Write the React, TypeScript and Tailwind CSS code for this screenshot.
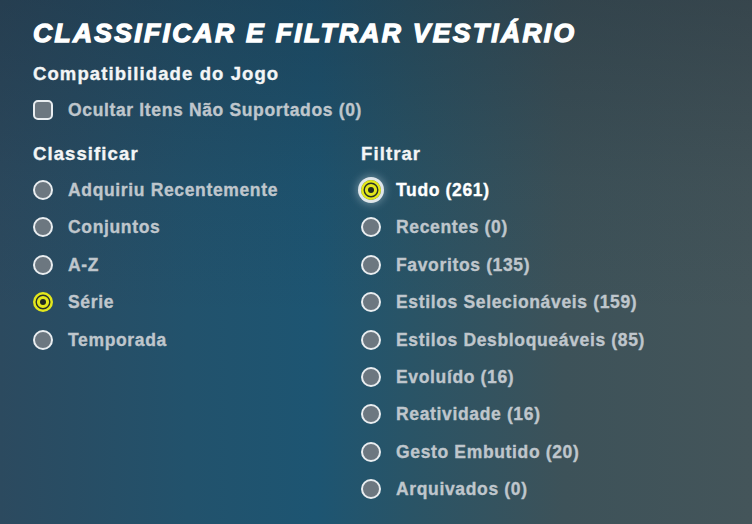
import React from "react";

type Opcao = { label: string; selected?: boolean; focused?: boolean };

const classificar: Opcao[] = [
  { label: "Adquiriu Recentemente" },
  { label: "Conjuntos" },
  { label: "A-Z" },
  { label: "Série", selected: true },
  { label: "Temporada" },
];

const filtrar: Opcao[] = [
  { label: "Tudo (261)", selected: true, focused: true },
  { label: "Recentes (0)" },
  { label: "Favoritos (135)" },
  { label: "Estilos Selecionáveis (159)" },
  { label: "Estilos Desbloqueáveis (85)" },
  { label: "Evoluído (16)" },
  { label: "Reatividade (16)" },
  { label: "Gesto Embutido (20)" },
  { label: "Arquivados (0)" },
];

// Radio de seleção: cinza quando inativo, anel amarelo quando marcado
const Radio: React.FC<{ selected?: boolean; focused?: boolean }> = ({ selected, focused }) => {
  if (!selected) {
    return <span className="block h-5 w-5 shrink-0 rounded-full border-2 border-[#e9edf0] bg-[#6c7780]" />;
  }
  return (
    <span
      className={
        "relative flex h-5 w-5 shrink-0 items-center justify-center rounded-full " +
        (focused ? "shadow-[0_0_0_3px_#dfe6ea,0_0_8px_4px_rgba(200,215,225,0.45)]" : "")
      }
    >
      <svg width="20" height="20" viewBox="0 0 20 20">
        <circle cx="10" cy="10" r="10" fill="#e3e71c" />
        <circle cx="10" cy="10" r="6.8" fill="none" stroke="#27302b" strokeWidth="1.4" />
        <circle cx="10" cy="10" r="3" fill="#1f2824" />
      </svg>
    </span>
  );
};

const Linha: React.FC<{ opcao: Opcao }> = ({ opcao }) => (
  <div className="flex h-[37.4px] items-center gap-[15px]">
    <Radio selected={opcao.selected} focused={opcao.focused} />
    <span
      className={
        "text-[17.5px] font-bold tracking-[0.65px] [-webkit-text-stroke:0.35px_currentColor] " +
        (opcao.focused ? "text-white" : "text-[#bfc6cc]")
      }
    >
      {opcao.label}
    </span>
  </div>
);

export default function App() {
  return (
    <div
      className="relative h-[524px] w-[752px] overflow-hidden bg-[linear-gradient(90deg,#2c4a5f_0%,#22526c_25%,#1d5572_42%,#2a5466_55%,#3d5259_75%,#44555a_100%)] font-['Liberation_Sans',Arial,sans-serif]"
    >
      <div className="pointer-events-none absolute inset-0 bg-[linear-gradient(180deg,rgba(24,34,46,0.3)_0%,rgba(24,34,46,0.08)_35%,rgba(0,0,0,0)_60%)]" />

      <div className="relative flex flex-col px-[33px] pt-[17px]">
        <h1 className="h-8 text-[26.5px] font-bold italic leading-8 tracking-[2.3px] text-white [-webkit-text-stroke:1.3px_white]">
          CLASSIFICAR E FILTRAR VESTIÁRIO
        </h1>

        <h2 className="mt-[13px] h-6 text-[18.5px] font-bold leading-6 tracking-[1.1px] text-[#f3f5f6] [-webkit-text-stroke:0.35px_currentColor]">
          Compatibilidade do Jogo
        </h2>

        <label className="mt-[5px] flex h-[37.4px] items-center gap-[15px]">
          <span className="block h-5 w-5 rounded-[5px] border-2 border-[#e9edf0] bg-[#6c7780]" />
          <span className="text-[17.5px] font-bold tracking-[0.65px] text-[#bfc6cc] [-webkit-text-stroke:0.35px_currentColor]">
            Ocultar Itens Não Suportados (0)
          </span>
        </label>

        <div className="mt-[14px] grid grid-cols-[328px_1fr]">
          <div className="flex flex-col">
            <h3 className="h-6 text-[18.5px] font-bold leading-6 tracking-[1.1px] text-[#f3f5f6] [-webkit-text-stroke:0.35px_currentColor]">
              Classificar
            </h3>
            <div className="mt-[5px] flex flex-col">
              {classificar.map((o) => (
                <Linha key={o.label} opcao={o} />
              ))}
            </div>
          </div>
          <div className="flex flex-col">
            <h3 className="h-6 text-[18.5px] font-bold leading-6 tracking-[1.1px] text-[#f3f5f6] [-webkit-text-stroke:0.35px_currentColor]">
              Filtrar
            </h3>
            <div className="mt-[5px] flex flex-col">
              {filtrar.map((o) => (
                <Linha key={o.label} opcao={o} />
              ))}
            </div>
          </div>
        </div>
      </div>
    </div>
  );
}
